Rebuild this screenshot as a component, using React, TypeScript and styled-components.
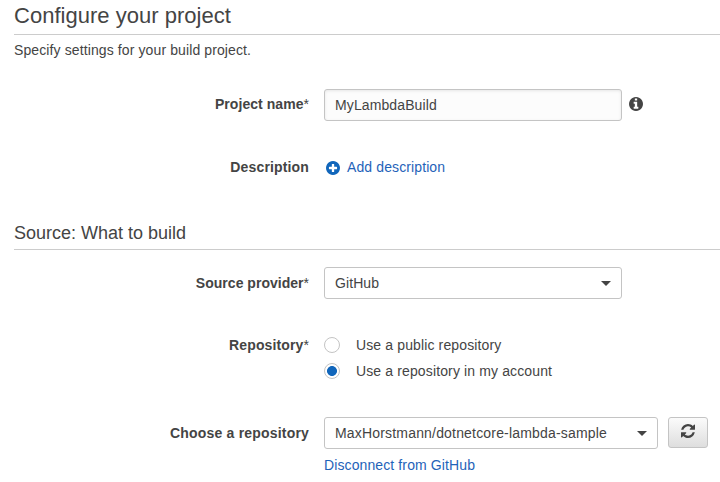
import React, { useState } from "react";
import styled, { createGlobalStyle, css } from "styled-components";

const GlobalStyle = createGlobalStyle`
  * { box-sizing: border-box; }
  body {
    margin: 0;
    background: #fff;
    color: #444;
    font: 14px/20px "Liberation Sans", Arial, sans-serif;
    letter-spacing: 0.11px;
    overflow: hidden;
  }
`;

const Page = styled.main`
  width: 720px;
  height: 482px;
  padding-left: 14px;
  overflow: hidden;
`;

const Title = styled.h1`
  margin: 0;
  height: 35px;
  border-bottom: 1px solid #ccc;
  font-size: 22px;
  line-height: 31px;
  font-weight: 400;
  letter-spacing: 0.02px;
`;

const Intro = styled.p`
  margin: 5px 0 29px;
`;

const Heading = styled.h2`
  margin: 0 0 17px;
  height: 33px;
  border-bottom: 1px solid #ccc;
  font-size: 18px;
  line-height: 32px;
  font-weight: 400;
  letter-spacing: 0;
`;

const Row = styled.div<{ $gap: number }>`
  display: grid;
  grid-template-columns: 295px 1fr;
  column-gap: 15px;
  margin-bottom: ${(p) => p.$gap}px;
`;

const Label = styled.div<{ $height: number; $spacing: number }>`
  text-align: right;
  font-weight: 700;
  line-height: ${(p) => p.$height}px;
  letter-spacing: ${(p) => p.$spacing}px;
`;

const Required = styled.span`
  font-weight: 400;
`;

const Field = styled.div`
  display: flex;
  align-items: flex-start;
`;

const control = css`
  height: 32px;
  padding: 0 10px;
  border: 1px solid #c4c4c4;
  border-radius: 3px;
  color: #444;
`;

const Input = styled.input`
  ${control}
  width: 298px;
  background: #fcfcfc;
  box-shadow: inset 0 1px 3px #e6e6e6;
  font: inherit;
  letter-spacing: inherit;
  outline: 0;
`;

const Select = styled.div<{ $width: number; $spacing?: number }>`
  ${control}
  display: flex;
  align-items: center;
  justify-content: space-between;
  width: ${(p) => p.$width}px;
  letter-spacing: ${(p) => p.$spacing ?? 0.08}px;
`;

const Caret = styled.i`
  border: 5px solid transparent;
  border-top-color: #444;
  border-bottom: 0;
`;

const Link = styled.a`
  display: inline-flex;
  align-items: center;
  color: #1f63b9;
  cursor: pointer;
`;

const AddLink = styled(Link)`
  gap: 7px;
  height: 26px;
  padding-left: 2px;
`;

const Icon = styled.svg`
  width: 14px;
  height: 14px;
  flex: none;
  fill: currentColor;
`;

const AddIcon = styled(Icon)`
  margin-top: 1px;
  color: #1166bb;
`;

const InfoIcon = styled(Icon)`
  margin: 8px 0 0 7px;
`;

const RadioGroup = styled.div`
  display: flex;
  flex-direction: column;
`;

const RadioLabel = styled.label`
  display: flex;
  align-items: center;
  gap: 16px;
  height: 26px;
  letter-spacing: 0.13px;
`;

const Radio = styled.input`
  appearance: none;
  width: 16px;
  height: 16px;
  margin: 0;
  border: 1px solid #c4c4c4;
  border-radius: 50%;
  background: #fff;
  &:checked {
    background: radial-gradient(circle, #1166bb 4.6px, #fff 5.3px);
  }
`;

const RefreshButton = styled.button`
  display: flex;
  align-items: flex-start;
  justify-content: center;
  width: 40px;
  height: 31px;
  margin-left: 10px;
  padding: 6px 0 0;
  border: 1px solid #c4c4c4;
  border-radius: 3px;
  background: linear-gradient(#fbfbfb, #dedede);
  color: #444;
`;

const DisconnectLink = styled(Link)`
  margin: 6px 0 0 310px;
`;

const iconBox = "128 128 1536 1536";
const disc =
  "M1664 896q0 209-103 385.5t-279.5 279.5-385.5 103-385.5-103-279.5-279.5-103-385.5 103-385.5 279.5-279.5 385.5-103 385.5 103 279.5 279.5 103 385.5z";
const plus =
  "M1344 960v-128q0-26-19-45t-45-19h-256v-256q0-26-19-45t-45-19h-128q-26 0-45 19t-19 45v256h-256q-26 0-45 19t-19 45v128q0 26 19 45t45 19h256v256q0 26 19 45t45 19h128q26 0 45-19t19-45v-256h256q26 0 45-19t19-45z";
const info =
  "M1152 1376v-160q0-14-9-23t-23-9h-96v-512q0-14-9-23t-23-9h-320q-14 0-23 9t-9 23v160q0 14 9 23t23 9h96v320h-96q-14 0-23 9t-9 23v160q0 14 9 23t23 9h448q14 0 23-9t9-23zM1024 480v-160q0-14-9-23t-23-9h-192q-14 0-23 9t-9 23v160q0 14 9 23t23 9h192q14 0 23-9t9-23z";
const refresh =
  "M1639 1056q0 5-1 7-64 268-268 434.5t-478 166.5q-146 0-282.5-55t-243.5-157l-129 129q-19 19-45 19t-45-19-19-45v-448q0-26 19-45t45-19h448q26 0 45 19t19 45-19 45l-137 137q71 66 161 102t187 36q134 0 250-65t186-179q11-17 53-117 8-23 30-23h192q13 0 22.5 9.5t9.5 22.5zm25-800v448q0 26-19 45t-45 19h-448q-26 0-45-19t-19-45 19-45l138-138q-148-137-349-137-134 0-250 65t-186 179q-11 17-53 117-8 23-30 23h-199q-13 0-22.5-9.5t-9.5-22.5v-7q65-268 270-434.5t480-166.5q146 0 284 55.5t245 156.5l130-129q19-19 45-19t45 19 19 45z";

const repositoryOptions = ["Use a public repository", "Use a repository in my account"];

export default function App() {
  const [repository, setRepository] = useState(1);
  return (
    <Page>
      <GlobalStyle />
      <Title>Configure your project</Title>
      <Intro>Specify settings for your build project.</Intro>
      <Row $gap={33}>
        <Label $height={31} $spacing={0.05}>Project name<Required>*</Required></Label>
        <Field>
          <Input defaultValue="MyLambdaBuild" />
          <InfoIcon viewBox={iconBox}>
            <path fillRule="evenodd" d={disc + info} />
          </InfoIcon>
        </Field>
      </Row>
      <Row $gap={37}>
        <Label $height={26} $spacing={0.15}>Description</Label>
        <Field>
          <AddLink>
            <AddIcon viewBox={iconBox}>
              <path fillRule="evenodd" d={disc + plus} />
            </AddIcon>
            Add description
          </AddLink>
        </Field>
      </Row>
      <Heading>Source: What to build</Heading>
      <Row $gap={33}>
        <Label $height={32} $spacing={0.02}>Source provider<Required>*</Required></Label>
        <Field>
          <Select $width={298}>GitHub<Caret /></Select>
        </Field>
      </Row>
      <Row $gap={33}>
        <Label $height={26} $spacing={0.12}>Repository<Required>*</Required></Label>
        <RadioGroup>
          {repositoryOptions.map((option, i) => (
            <RadioLabel key={option}>
              <Radio
                type="radio"
                name="repository"
                checked={repository === i}
                onChange={() => setRepository(i)}
              />
              {option}
            </RadioLabel>
          ))}
        </RadioGroup>
      </Row>
      <Row $gap={0}>
        <Label $height={32} $spacing={0.19}>Choose a repository</Label>
        <Field>
          <Select $width={334} $spacing={0.18}>MaxHorstmann/dotnetcore-lambda-sample<Caret /></Select>
          <RefreshButton aria-label="Refresh">
            <Icon viewBox={iconBox}><path d={refresh} /></Icon>
          </RefreshButton>
        </Field>
      </Row>
      <DisconnectLink>Disconnect from GitHub</DisconnectLink>
    </Page>
  );
}
